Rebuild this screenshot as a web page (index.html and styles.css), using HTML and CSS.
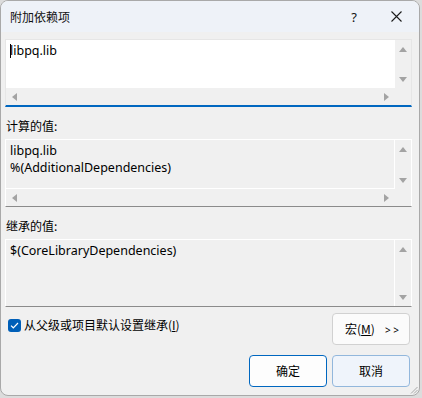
FILE: index.html
```html
<!DOCTYPE html>
<html lang="zh-CN">
<head>
<meta charset="utf-8">
<title>附加依赖项</title>
<link rel="stylesheet" href="styles.css">
</head>
<body>
<div class="window">
  <div class="titlebar">
    <span class="title">附加依赖项</span>
    <span class="help">?</span>
    <span class="close">
      <svg width="11" height="11" viewBox="0 0 11 11"><path d="M0.5 0.5 L10.5 10.5 M10.5 0.5 L0.5 10.5" stroke="#1b1b1b" stroke-width="1.1" fill="none"/></svg>
    </span>
  </div>
  <div class="content">
    <div class="box box-edit">
      <div class="text text-white"><span class="caret"></span>libpq.lib</div>
      <div class="vscroll">
        <span class="arr up"></span><span class="arr down"></span>
      </div>
      <div class="hscroll">
        <span class="arr left"></span><span class="arr right"></span>
      </div>
      <div class="corner"></div>
    </div>

    <div class="label">计算的值:</div>
    <div class="box box-ro">
      <div class="text text-ro sep-r sep-b">libpq.lib<br>%(AdditionalDependencies)</div>
      <div class="vscroll">
        <span class="arr up"></span><span class="arr down"></span>
      </div>
      <div class="hscroll">
        <span class="arr left"></span><span class="arr right"></span>
      </div>
      <div class="corner"></div>
    </div>

    <div class="label">继承的值:</div>
    <div class="box box-ro box-novh">
      <div class="text text-ro sep-r">$(CoreLibraryDependencies)</div>
      <div class="vscroll">
        <span class="arr up"></span><span class="arr down"></span>
      </div>
    </div>

    <div class="row-check">
      <label class="check">
        <span class="cb">
          <svg width="9" height="7" viewBox="0 0 9 7"><path d="M1 3.6 L3.3 5.8 L8 1" stroke="#fff" stroke-width="1.2" fill="none"/></svg>
        </span>
        <span>从父级或项目默认设置继承(<u>I</u>)</span>
      </label>
      <button class="btn btn-macro">宏(<u>M</u>)<span class="chev">&gt; &gt;</span></button>
    </div>

    <div class="row-buttons">
      <button class="btn btn-default">确定</button>
      <button class="btn btn-hover">取消</button>
    </div>
  </div>
  <div class="grip">
    <svg width="8" height="8" viewBox="0 0 8 8"><path d="M7.5 1 L1 7.5 M7.5 4 L4 7.5" stroke="#a8a8a8" stroke-width="1" fill="none"/></svg>
  </div>
</div>
</body>
</html>
```

FILE: styles.css
```css
* { box-sizing: border-box; }

html, body {
  margin: 0;
  padding: 0;
}

body {
  width: 422px;
  height: 398px;
  background: #dcdcdc;
  font-family: "Noto Sans", "Noto Sans CJK SC", sans-serif;
  font-size: 12px;
  color: #000;
  overflow: hidden;
}

.window {
  position: relative;
  width: 420px;
  height: 396px;
  background: #f0f0f0;
  border: 1px solid #a9a9a9;
  border-radius: 8px;
  overflow: hidden;
}

.titlebar {
  height: 31px;
  background: #eef2f8;
  display: flex;
  align-items: center;
  padding-left: 9px;
  color: #111;
  font-family: "Noto Sans CJK SC", sans-serif;
}

.title {
  flex: 1;
  font-size: 12px;
  line-height: 16px;
}

.help {
  width: 46px;
  text-align: center;
  font-family: "Noto Sans", sans-serif;
  font-size: 13px;
  margin-right: -2px;
  padding-left: 4px;
}

.close {
  width: 46px;
  height: 31px;
  display: flex;
  align-items: center;
  justify-content: center;
}

.content {
  padding: 7px 9px 0 4px;
}

.box {
  display: grid;
  grid-template-columns: 1fr 16px;
  grid-template-rows: 1fr 17px;
  height: 68px;
  width: 407px;
  border: 1px solid #ffffff;
}

.box-edit {
  border-color: #e6e6e6;
  border-bottom: 2px solid #0067c0;
}

.box-ro {
  border-bottom-color: #8b8b8b;
}

.box-novh {
  grid-template-rows: 1fr;
}

.text {
  padding: 3px 4px;
  line-height: 16.5px;
  font-size: 12.5px;
  white-space: nowrap;
  overflow: hidden;
  position: relative;
}

.text-white {
  background: #ffffff;
}

.text-ro {
  background: #f0f0f0;
  padding-top: 3px;
}

.sep-r { border-right: 1px solid #ffffff; }
.sep-b { border-bottom: 1px solid #ffffff; }

.caret {
  display: inline-block;
  width: 1px;
  height: 14px;
  background: #000;
  vertical-align: -3px;
  margin-right: -1px;
}

.vscroll {
  background: #f0f0f0;
  display: flex;
  flex-direction: column;
  justify-content: space-between;
  align-items: center;
  padding: 7px 0 6px;
}

.hscroll {
  background: #f0f0f0;
  display: flex;
  justify-content: space-between;
  align-items: center;
  padding: 0 6px 0 6px;
}

.corner { background: #f0f0f0; }

.arr {
  width: 0;
  height: 0;
  display: block;
}

.arr.up {
  border-left: 4.5px solid transparent;
  border-right: 4.5px solid transparent;
  border-bottom: 5px solid #a3a3a3;
}

.arr.down {
  border-left: 4.5px solid transparent;
  border-right: 4.5px solid transparent;
  border-top: 5px solid #a3a3a3;
}

.arr.left {
  border-top: 4.5px solid transparent;
  border-bottom: 4.5px solid transparent;
  border-right: 5px solid #a3a3a3;
}

.arr.right {
  border-top: 4.5px solid transparent;
  border-bottom: 4.5px solid transparent;
  border-left: 5px solid #a3a3a3;
}

.label {
  height: 32px;
  padding-top: 11px;
  padding-left: 1px;
  line-height: 16px;
  font-family: "Noto Sans CJK SC", sans-serif;
}

.row-check {
  display: flex;
  justify-content: space-between;
  align-items: flex-start;
  padding-top: 6px;
  padding-left: 3px;
}

.check {
  display: flex;
  align-items: center;
  gap: 3px;
  margin-top: 4px;
  font-family: "Noto Sans CJK SC", sans-serif;
  line-height: 16px;
}

.check u { text-underline-offset: 1px; }

.cb {
  width: 13px;
  height: 13px;
  background: #005fb8;
  border-radius: 3px;
  display: flex;
  align-items: center;
  justify-content: center;
}

.btn {
  width: 78px;
  height: 32px;
  border: 1px solid #d1d1d1;
  border-radius: 4px;
  background: #fbfbfb;
  font-family: "Noto Sans CJK SC", sans-serif;
  font-size: 12px;
  color: #000;
  padding: 0;
  line-height: 16px;
}

.btn-macro {
  padding-left: 2px;
}

.chev {
  font-family: "Noto Sans", sans-serif;
  font-size: 10px;
  margin-left: 10px;
}

.row-buttons {
  display: flex;
  justify-content: flex-end;
  gap: 5px;
  margin-top: 10px;
}

.btn-default {
  border-color: #0067c0;
  background: #fdfdfd;
}

.btn-hover {
  border-color: #92b7dc;
  background: #eff4fb;
}

.grip {
  position: absolute;
  right: 1px;
  bottom: 1px;
  width: 8px;
  height: 8px;
  display: flex;
}
```
